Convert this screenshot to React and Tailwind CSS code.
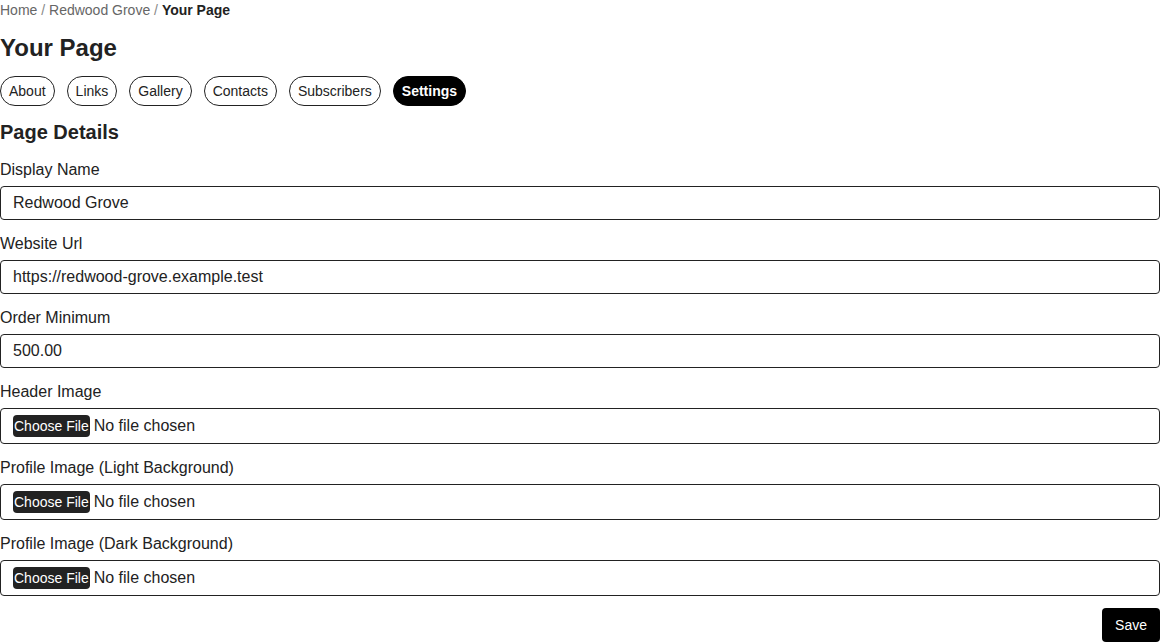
import React from "react";

const tabs = ["About", "Links", "Gallery", "Contacts", "Subscribers", "Settings"];

function TextField({ label, value }) {
  return (
    <div className="flex flex-col gap-1">
      <label className="text-base leading-6">{label}</label>
      <input
        type="text"
        defaultValue={value}
        className="w-full border border-[#222] rounded px-3 py-1 text-base leading-6 text-[#222] bg-white outline-none"
        style={{ fontFamily: "inherit" }}
      />
    </div>
  );
}

function FileField({ label }) {
  return (
    <div className="flex flex-col gap-1">
      <label className="text-base leading-6">{label}</label>
      <input
        type="file"
        className="w-full border border-[#222] rounded px-3 py-[5px] text-base leading-6 text-[#222] bg-white file:bg-[#222] file:text-white file:border-0 file:rounded file:px-[1px] file:py-[2px] file:mr-1 file:text-[14px] file:leading-[18px]"
        style={{ fontFamily: "inherit" }}
      />
    </div>
  );
}

export default function App() {
  return (
    <div
      className="w-[1160px] flex flex-col gap-3 text-[#222] bg-white"
      style={{ fontFamily: '"Liberation Sans", Arial, sans-serif' }}
    >
      <nav className="text-sm leading-5 text-[#666]">
        <span>Home</span>
        <span className="text-[#888]"> / </span>
        <span>Redwood Grove</span>
        <span className="text-[#888]"> / </span>
        <span className="font-bold text-[#222]">Your Page</span>
      </nav>
      <h1 className="text-2xl leading-8 font-bold">Your Page</h1>
      <div className="flex gap-3">
        {tabs.map((t) =>
          t === "Settings" ? (
            <span
              key={t}
              className="rounded-full border border-black bg-black text-white font-bold text-sm leading-5 px-2 py-1"
            >
              {t}
            </span>
          ) : (
            <span
              key={t}
              className="rounded-full border border-[#222] text-sm leading-5 px-2 py-1"
            >
              {t}
            </span>
          )
        )}
      </div>
      <h2 className="text-xl leading-7 font-bold">Page Details</h2>
      <TextField label="Display Name" value="Redwood Grove" />
      <TextField label="Website Url" value="https://redwood-grove.example.test" />
      <TextField label="Order Minimum" value="500.00" />
      <FileField label="Header Image" />
      <FileField label="Profile Image (Light Background)" />
      <FileField label="Profile Image (Dark Background)" />
      <div className="flex justify-end">
        <button className="bg-black text-white text-sm leading-5 px-[13px] py-[7px] rounded">
          Save
        </button>
      </div>
    </div>
  );
}
